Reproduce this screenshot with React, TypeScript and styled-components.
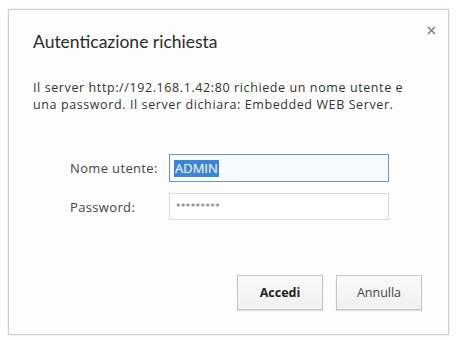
import React from "react";
import styled, { createGlobalStyle } from "styled-components";

const Global = createGlobalStyle`
  html, body { margin: 0; padding: 0; background: #ffffff; }
  body { font-family: "Open Sans", "Noto Sans", sans-serif; }
`;

const Page = styled.div`
  width: 457px;
  height: 340px;
  padding: 9px 0 0 8px;
  box-sizing: border-box;
`;

const Dialog = styled.div`
  position: relative;
  width: 441px;
  height: 326px;
  box-sizing: border-box;
  border: 1px solid #cfcfcf;
  box-shadow: 0 0 2px rgba(0, 0, 0, 0.15);
  background: #fdfdfd;
  padding: 20px 24px 0 24px;
  display: flex;
  flex-direction: column;
`;

const Close = styled.button`
  position: absolute;
  top: 12px;
  right: 9px;
  width: 16px;
  height: 16px;
  padding: 0;
  border: 0;
  background: transparent;
  display: flex;
  align-items: center;
  justify-content: center;
`;

const Title = styled.h1`
  margin: 0;
  font-family: Lato, "Open Sans", sans-serif;
  font-size: 17.5px;
  font-weight: 400;
  color: #2a2a2a;
  line-height: 24px;
`;

const Message = styled.p`
  margin: 25px 0 0 0;
  font-size: 12.5px;
  letter-spacing: 0.6px;
  line-height: 17px;
  color: #333333;
  white-space: nowrap;
`;

const Form = styled.div`
  margin: 41px 0 0 37px;
  display: grid;
  grid-template-columns: 99px 220px;
  row-gap: 11px;
  align-items: center;
`;

const Label = styled.label`
  font-size: 13px;
  letter-spacing: 0.35px;
  color: #444;
`;

const Field = styled.div<{ $focused?: boolean }>`
  height: ${(p) => (p.$focused ? "28px" : "27px")};
  box-sizing: border-box;
  border: 1px solid ${(p) => (p.$focused ? "#6f93b3" : "#d8d8d8")};
  background: ${(p) => (p.$focused ? "#f7fbfd" : "#ffffff")};
  display: flex;
  align-items: center;
  padding-left: 4px;
  font-size: 13px;
`;

const Selected = styled.span`
  background: #3d84d6;
  color: #ffffff;
  padding: 0 1px;
  line-height: 17px;
`;

const Dots = styled.span`
  font-family: "DejaVu Sans", sans-serif;
  font-size: 9px;
  color: #666;
  letter-spacing: 0.4px;
  padding-left: 2px;
`;

const Buttons = styled.div`
  margin-top: auto;
  margin-bottom: 24px;
  display: flex;
  justify-content: flex-end;
  gap: 13px;
  padding-right: 2px;
`;

const Button = styled.button<{ $primary?: boolean }>`
  width: 86px;
  height: 35px;
  box-sizing: border-box;
  border: 1px solid #c6c6c6;
  box-shadow: 0 1px 1px rgba(0, 0, 0, 0.12);
  background: linear-gradient(#fafafa, #f0f0f0);
  font-family: "Open Sans", "Noto Sans", sans-serif;
  font-size: 12.5px;
  font-weight: ${(p) => (p.$primary ? 700 : 400)};
  color: ${(p) => (p.$primary ? "#222" : "#444")};
  padding: 0;
`;

export default function App() {
  return (
    <>
      <Global />
      <Page>
        <Dialog>
          <Close aria-label="Chiudi">
            <svg width="9" height="9" viewBox="0 0 9 9">
              <path d="M1 1L8 8M8 1L1 8" stroke="#777" strokeWidth="1.4" />
            </svg>
          </Close>
          <Title>Autenticazione richiesta</Title>
          <Message>
            Il server http://192.168.1.42:80 richiede un nome utente e
            <br />
            una password. Il server dichiara: Embedded WEB Server.
          </Message>
          <Form>
            <Label>Nome utente:</Label>
            <Field $focused>
              <Selected>ADMIN</Selected>
            </Field>
            <Label>Password:</Label>
            <Field>
              <Dots>*********</Dots>
            </Field>
          </Form>
          <Buttons>
            <Button $primary>Accedi</Button>
            <Button>Annulla</Button>
          </Buttons>
        </Dialog>
      </Page>
    </>
  );
}
